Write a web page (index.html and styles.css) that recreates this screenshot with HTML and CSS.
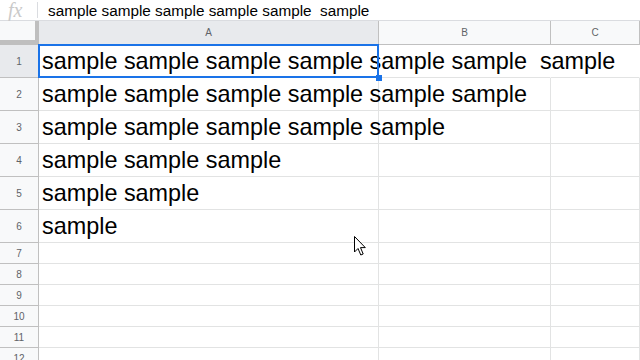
FILE: index.html
```html
<!DOCTYPE html>
<html lang="en">
<head>
    <meta charset="UTF-8">
    <title>Sheet</title>
    <link rel="stylesheet" href="styles.css">
</head>
<body>
    <div class="formula-bar">
        <div class="fx">fx</div>
        <div class="formula-sep"></div>
        <div class="formula-text">sample sample sample sample sample&nbsp; sample</div>
    </div>
    <div class="sheet">
        <div class="corner"></div>
        <div class="col-head active">A</div>
        <div class="col-head">B</div>
        <div class="col-head">C</div>

        <div class="row-head active tall">1</div>
        <div class="cell tall selected">sample sample sample sample sample sample&nbsp; sample</div>
        <div class="cell tall spill"></div>
        <div class="cell tall spill"></div>

        <div class="row-head tall">2</div>
        <div class="cell tall">sample sample sample sample sample sample</div>
        <div class="cell tall"></div>
        <div class="cell tall"></div>

        <div class="row-head tall">3</div>
        <div class="cell tall">sample sample sample sample sample</div>
        <div class="cell tall"></div>
        <div class="cell tall"></div>

        <div class="row-head tall">4</div>
        <div class="cell tall">sample sample sample</div>
        <div class="cell tall"></div>
        <div class="cell tall"></div>

        <div class="row-head tall">5</div>
        <div class="cell tall">sample sample</div>
        <div class="cell tall"></div>
        <div class="cell tall"></div>

        <div class="row-head tall">6</div>
        <div class="cell tall">sample</div>
        <div class="cell tall"></div>
        <div class="cell tall"></div>

        <div class="row-head">7</div><div class="cell"></div><div class="cell"></div><div class="cell"></div>
        <div class="row-head">8</div><div class="cell"></div><div class="cell"></div><div class="cell"></div>
        <div class="row-head">9</div><div class="cell"></div><div class="cell"></div><div class="cell"></div>
        <div class="row-head">10</div><div class="cell"></div><div class="cell"></div><div class="cell"></div>
        <div class="row-head">11</div><div class="cell"></div><div class="cell"></div><div class="cell"></div>
        <div class="row-head">12</div><div class="cell"></div><div class="cell"></div><div class="cell"></div>
    </div>
    <svg class="cursor" width="14" height="22" viewBox="0 0 14 22">
        <path d="M1.5 1.5 L1.5 17 L5 13.5 L7.8 20 L10.2 19 L7.5 12.6 L12.3 12.6 Z" fill="#fff" stroke="#000" stroke-width="1" stroke-linejoin="miter"/>
    </svg>
</body>
</html>
```

FILE: styles.css
```css
body {
    margin: 0;
    width: 640px;
    height: 360px;
    overflow: hidden;
    background-color: #fff;
    font-family: 'Liberation Sans', Arial, sans-serif;
    position: relative;
}
.formula-bar {
    display: flex;
    align-items: center;
    height: 20px;
    border-bottom: 1px solid #dadce0;
}
.fx {
    width: 37px;
    box-sizing: border-box;
    padding-left: 8px;
    font-family: 'Liberation Serif', serif;
    font-style: italic;
    font-size: 20px;
    color: #cacaca;
    line-height: 20px;
}
.formula-sep {
    width: 1px;
    height: 16px;
    background-color: #dadce0;
}
.formula-text {
    padding-left: 10px;
    padding-top: 1px;
    font-size: 15.3px;
    color: #000;
    white-space: pre;
}
.sheet {
    display: grid;
    grid-template-columns: 39px 340px 172px 1fr;
    grid-template-rows: 24px repeat(6, 33px) repeat(6, 21px);
}
.corner {
    background-color: #f8f9fa;
    border-right: 4px solid #bfbfbf;
    border-bottom: 5px solid #bfbfbf;
    box-sizing: border-box;
}
.col-head {
    display: flex;
    align-items: center;
    justify-content: center;
    background-color: #f8f9fa;
    border-right: 1px solid #c0c0c0;
    border-bottom: 1px solid #c0c0c0;
    font-size: 10px;
    color: #5f6368;
    box-sizing: border-box;
}
.row-head {
    display: flex;
    align-items: center;
    justify-content: center;
    background-color: #f8f9fa;
    border-right: 1px solid #c0c0c0;
    border-bottom: 1px solid #c0c0c0;
    font-size: 10px;
    color: #5f6368;
    box-sizing: border-box;
}
.active {
    background-color: #e8eaed;
}
.cell {
    position: relative;
    display: flex;
    align-items: flex-end;
    padding: 0 0 2px 3px;
    border-right: 1px solid #e2e3e3;
    border-bottom: 1px solid #e2e3e3;
    box-sizing: border-box;
    font-size: 23.4px;
    color: #000;
    white-space: pre;
    overflow: visible;
    min-width: 0;
}
.spill {
    border-right-color: transparent;
}
.selected::after {
    content: "";
    position: absolute;
    left: -1px;
    top: -1px;
    right: -1px;
    bottom: -1px;
    border: 2px solid #1a73e8;
}
.selected::before {
    content: "";
    position: absolute;
    right: -4px;
    bottom: -4px;
    width: 6px;
    height: 6px;
    background-color: #1a73e8;
    z-index: 2;
}
.cursor {
    position: absolute;
    left: 353px;
    top: 235px;
}
```
